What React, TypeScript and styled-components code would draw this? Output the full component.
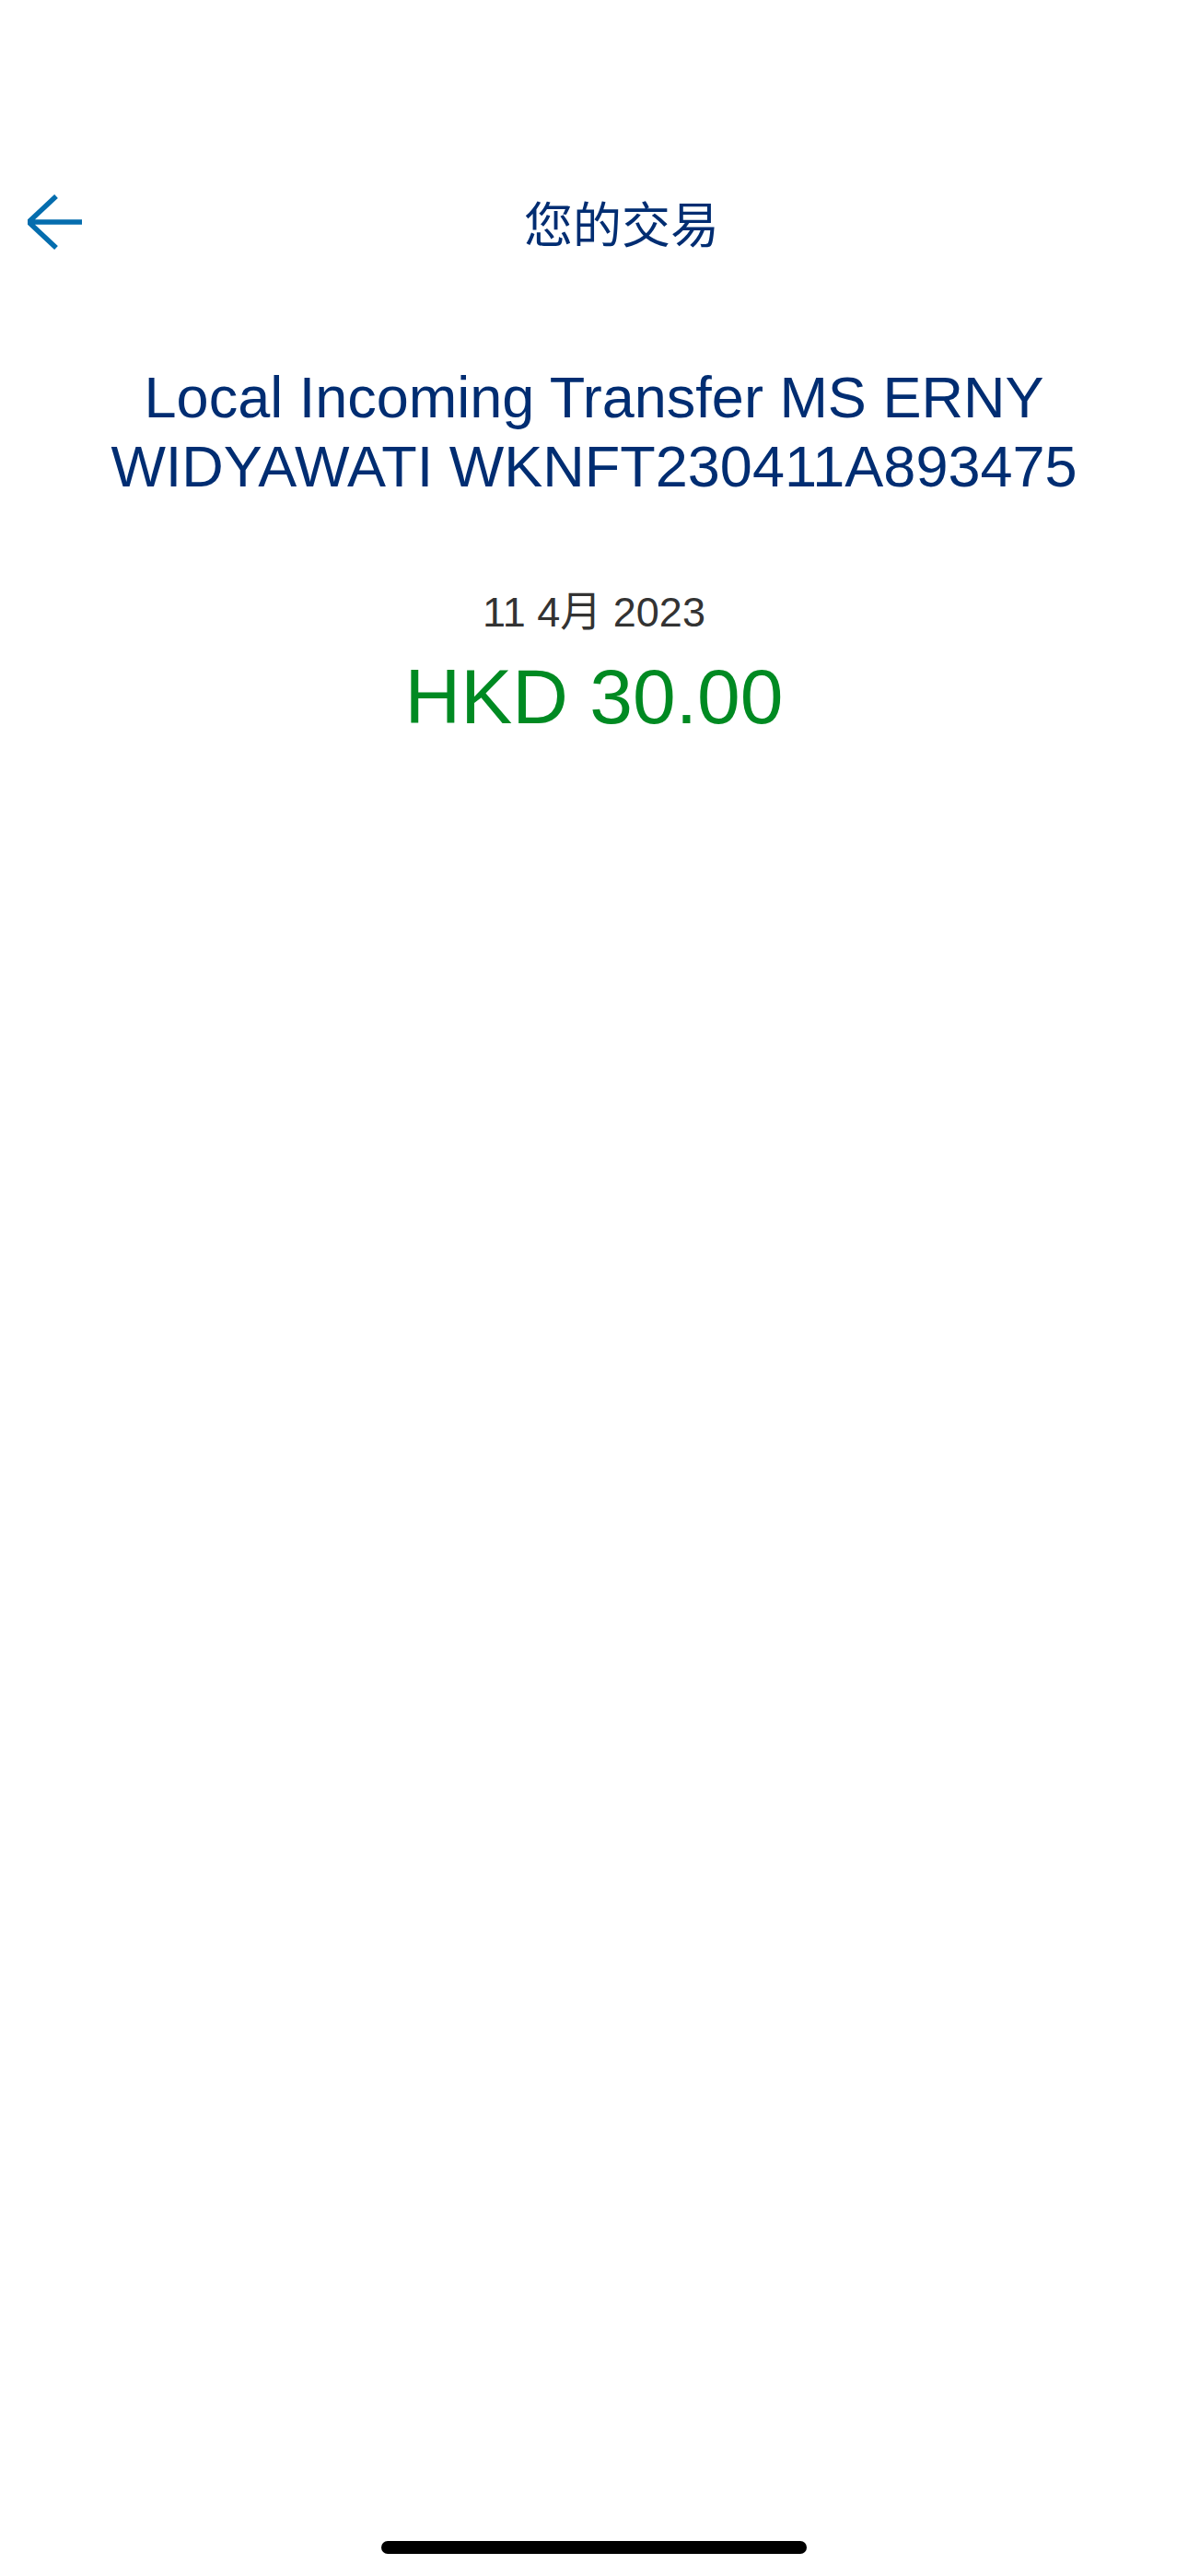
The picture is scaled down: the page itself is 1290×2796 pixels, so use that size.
import React from 'react';
import styled, { createGlobalStyle } from 'styled-components';

const GlobalStyle = createGlobalStyle`
  html, body {
    margin: 0;
    padding: 0;
    background: #ffffff;
  }
  body {
    font-family: 'Liberation Sans', 'Noto Sans CJK TC', sans-serif;
  }
`;

const Screen = styled.main`
  width: 1290px;
  height: 2796px;
  background: #ffffff;
  display: flex;
  flex-direction: column;
  padding-top: 193px;
  box-sizing: border-box;
`;

const Header = styled.header`
  height: 96px;
  display: flex;
  align-items: center;
  padding: 0 30px;
`;

const BackButton = styled.button`
  width: 60px;
  height: 60px;
  padding: 0;
  border: none;
  background: none;
  display: flex;
  align-items: center;
  justify-content: center;
  cursor: pointer;
`;

const HeaderTitle = styled.h1`
  flex: 1;
  margin: 0;
  text-align: center;
  font-family: 'Noto Sans CJK TC', 'Noto Sans CJK SC', sans-serif;
  font-size: 53px;
  font-weight: 400;
  line-height: 60px;
  color: #002d72;
`;

const Detail = styled.section`
  display: flex;
  flex-direction: column;
  align-items: center;
  padding: 0 60px;
`;

const Description = styled.h2`
  margin: 105px 0 0;
  text-align: center;
  font-family: 'Liberation Sans', sans-serif;
  font-size: 63px;
  font-weight: 400;
  line-height: 75px;
  color: #002d72;
`;

const DateText = styled.div`
  margin-top: 95px;
  font-family: 'Liberation Sans', 'Noto Sans CJK TC', sans-serif;
  font-size: 45px;
  line-height: 52px;
  color: #333333;
`;

const Amount = styled.div<{ $positive?: boolean }>`
  margin-top: 17px;
  font-family: 'Liberation Sans', sans-serif;
  font-size: 84px;
  line-height: 96px;
  color: ${props => (props.$positive ? '#008a22' : '#002d72')};
`;

const Spacer = styled.div`
  flex: 1;
`;

const HomeIndicator = styled.div`
  align-self: center;
  width: 462px;
  height: 14px;
  border-radius: 7px;
  background: #000000;
  margin-bottom: 24px;
`;

const BackArrow = () => (
  <svg width="60" height="60" viewBox="0 0 60 60" fill="none">
    <path
      d="M31 2 L1 30 L31 58 M1 30 H59"
      stroke="#056dae"
      strokeWidth="5.5"
      strokeLinejoin="miter"
    />
  </svg>
);

export default function App() {
  return (
    <>
      <GlobalStyle />
      <Screen>
        <Header>
          <BackButton aria-label="返回">
            <BackArrow />
          </BackButton>
          <HeaderTitle>您的交易</HeaderTitle>
        </Header>

        <Detail>
          <Description>
            Local Incoming Transfer MS ERNY WIDYAWATI WKNFT230411A893475
          </Description>
          <DateText>11 4月 2023</DateText>
          <Amount $positive>HKD 30.00</Amount>
        </Detail>

        <Spacer />
        <HomeIndicator />
      </Screen>
    </>
  );
}
